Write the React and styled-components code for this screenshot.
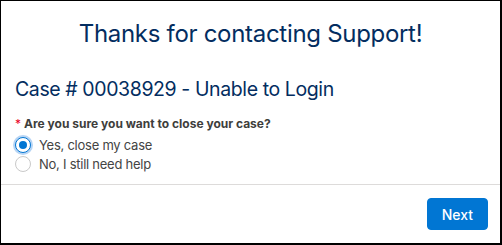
import React, { useState } from 'react';
import styled, { createGlobalStyle } from 'styled-components';

const Global = createGlobalStyle`
  html, body {
    margin: 0;
    padding: 0;
    background: #fff;
  }
  * {
    box-sizing: border-box;
  }
`;

const Frame = styled.div`
  width: 502px;
  height: 245px;
  border: 1px solid #000;
  border-right-width: 2px;
  border-bottom-width: 2px;
  display: flex;
  flex-direction: column;
  font-family: Inter, 'Noto Sans', sans-serif;
  background: #fff;
`;

const Body = styled.div`
  flex: 1;
  padding: 0 14px;
  border-bottom: 1px solid #dddbda;
`;

const Title = styled.h1`
  margin: 18px 0 0;
  text-align: center;
  font-size: 24px;
  font-weight: 400;
  letter-spacing: -0.3px;
  color: #032d60;
  line-height: 30px;
`;

const CaseTitle = styled.h2`
  margin: 27px 0 0;
  font-size: 19.5px;
  font-weight: 400;
  letter-spacing: -0.4px;
  color: #032d60;
  line-height: 26px;
`;

const Question = styled.div`
  margin-top: 14px;
  font-size: 12px;
  font-weight: 700;
  color: #3e3e3c;
  line-height: 16px;
  display: flex;
  align-items: baseline;
  gap: 3px;
`;

const Required = styled.span`
  color: #ea001e;
  font-weight: 400;
`;

const Options = styled.div`
  margin-top: 3px;
  display: flex;
  flex-direction: column;
`;

const Option = styled.label`
  display: flex;
  align-items: center;
  gap: 8px;
  height: 19px;
  font-size: 13px;
  letter-spacing: -0.25px;
  color: #444;
  cursor: pointer;
`;

const Circle = styled.span`
  width: 16px;
  height: 16px;
  border-radius: 50%;
  border: 1px solid ${(p) => (p.checked ? '#0176d3' : '#c9c9c9')};
  box-shadow: ${(p) => (p.checked ? '0 0 0 2px #b6d4f4' : 'none')};
  display: flex;
  align-items: center;
  justify-content: center;
  background: #fff;
  &::after {
    content: '';
    width: 8px;
    height: 8px;
    border-radius: 50%;
    background: ${(p) => (p.checked ? '#0176d3' : 'transparent')};
  }
`;

const Footer = styled.div`
  height: 58px;
  display: flex;
  align-items: center;
  justify-content: flex-end;
  padding: 0 12px;
`;

const Button = styled.button`
  height: 32px;
  padding: 0 14px;
  border: 1px solid #0176d3;
  border-radius: 4px;
  background: #0176d3;
  color: #fff;
  font-family: Inter, 'Noto Sans', sans-serif;
  font-size: 14px;
  font-weight: 500;
  cursor: pointer;
`;

const options = ['Yes, close my case', 'No, I still need help'];

const App = () => {
  const [choice, setChoice] = useState(0);
  return (
    <Frame>
      <Global />
      <Body>
        <Title>Thanks for contacting Support!</Title>
        <CaseTitle>Case # 00038929 - Unable to Login</CaseTitle>
        <Question>
          <Required>*</Required>
          Are you sure you want to close your case?
        </Question>
        <Options>
          {options.map((o, i) => (
            <Option key={o} onClick={() => setChoice(i)}>
              <Circle checked={choice === i} />
              {o}
            </Option>
          ))}
        </Options>
      </Body>
      <Footer>
        <Button>Next</Button>
      </Footer>
    </Frame>
  );
};

export default App;
